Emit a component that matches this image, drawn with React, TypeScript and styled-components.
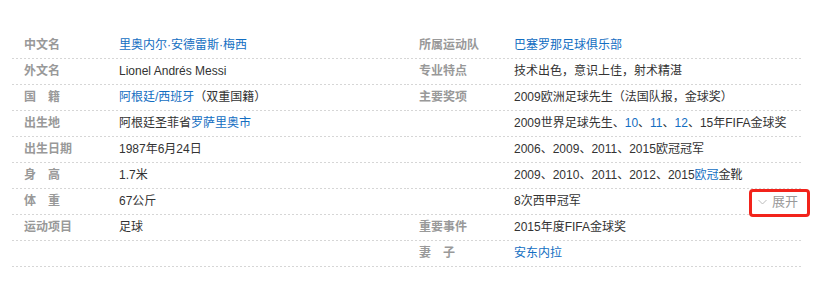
import React from 'react';
import styled, { createGlobalStyle } from 'styled-components';

const GlobalStyle = createGlobalStyle`
  body {
    margin: 0;
    background: #fff;
    font-family: "Liberation Sans", Arial, "Noto Sans CJK SC", sans-serif;
    font-size: 12px;
    color: #333;
  }
`;

const BasicInfo = styled.div`
  display: grid;
  grid-template-columns: 395px 395px;
  padding: 33px 12px 0;
`;

const Column = styled.dl`
  display: flex;
  flex-direction: column;
  margin: 0;
`;

const Row = styled.div`
  display: flex;
  align-items: center;
  height: 25px;
  line-height: 25px;
  padding-left: 12px;
  padding-bottom: 1px;
  background: linear-gradient(to right, #d6d6d6 50%, transparent 0) left bottom / 4px 1px repeat-x;
`;

const Label = styled.dt`
  width: 95px;
  flex: none;
  color: #999;
  font-weight: bold;
  white-space: pre;
`;

const Value = styled.dd`
  margin: 0;
  color: #333;
  white-space: nowrap;
`;

const Link = styled.a`
  color: #136ec2;
  text-decoration: none;
`;

const ExpandToggle = styled.span`
  position: relative;
  display: inline-flex;
  align-items: center;
  gap: 5px;
  margin-left: auto;
  margin-right: 4px;
  color: #999;
  font-size: 13px;
  cursor: pointer;

  &::after {
    content: '';
    position: absolute;
    left: -9px;
    right: -12px;
    top: 0;
    bottom: -3px;
    border: 3px solid #f2231b;
    border-radius: 4px;
  }
`;

const Chevron = () => (
  <svg width="9" height="6" viewBox="0 0 9 6">
    <polyline points="0.5,1 4.5,5 8.5,1" fill="none" stroke="#bbb" strokeWidth="1" />
  </svg>
);

type Item = { label?: string; value: React.ReactNode; toggle?: boolean };

const left: Item[] = [
  { label: '中文名', value: <Link>里奥内尔·安德雷斯·梅西</Link> },
  { label: '外文名', value: 'Lionel Andrés Messi' },
  { label: '国　籍', value: <><Link>阿根廷/西班牙</Link>（双重国籍）</> },
  { label: '出生地', value: <>阿根廷圣菲省<Link>罗萨里奥市</Link></> },
  { label: '出生日期', value: '1987年6月24日' },
  { label: '身　高', value: '1.7米' },
  { label: '体　重', value: '67公斤' },
  { label: '运动项目', value: '足球' },
  { value: '' },
];

const right: Item[] = [
  { label: '所属运动队', value: <Link>巴塞罗那足球俱乐部</Link> },
  { label: '专业特点', value: '技术出色，意识上佳，射术精湛' },
  { label: '主要奖项', value: '2009欧洲足球先生（法国队报，金球奖）' },
  {
    value: (
      <>
        2009世界足球先生、<Link>10</Link>、<Link>11</Link>、<Link>12</Link>、15年FIFA金球奖
      </>
    ),
  },
  { value: '2006、2009、2011、2015欧冠冠军' },
  { value: <>2009、2010、2011、2012、2015<Link>欧冠</Link>金靴</> },
  { value: '8次西甲冠军', toggle: true },
  { label: '重要事件', value: '2015年度FIFA金球奖' },
  { label: '妻　子', value: <Link>安东内拉</Link> },
];

const InfoColumn = ({ items }: { items: Item[] }) => (
  <Column>
    {items.map((item, i) => (
      <Row key={i}>
        <Label>{item.label ?? ''}</Label>
        <Value>{item.value}</Value>
        {item.toggle && (
          <ExpandToggle>
            <Chevron />
            展开
          </ExpandToggle>
        )}
      </Row>
    ))}
  </Column>
);

export default function App() {
  return (
    <>
      <GlobalStyle />
      <BasicInfo>
        <InfoColumn items={left} />
        <InfoColumn items={right} />
      </BasicInfo>
    </>
  );
}
